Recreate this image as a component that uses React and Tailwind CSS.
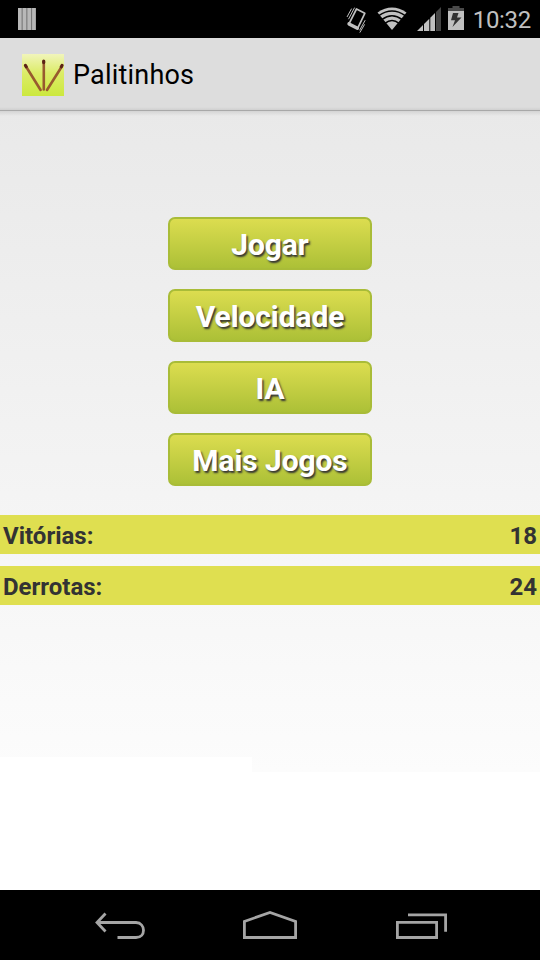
import React from 'react'

const menuItems = ["Jogar", "Velocidade", "IA", "Mais Jogos"];

const scores = [
  { label: "Vitórias:", value: 18 },
  { label: "Derrotas:", value: 24 },
];

const StatusBar = () => {
  return (
    <div className="flex h-[38px] shrink-0 items-start bg-black text-[#c0c0c0]">
      {/* sticks notification */}
      <svg width="18" height="22" viewBox="0 0 18 22" className="mt-2 ml-[18px]">
        <rect width="18" height="22" fill="#777" />
        <path d="M0 0h3.6v22H0zM4.7 0h3.6v22H4.7zM9.4 0h3.6v22H9.4zM14.1 0h3.6v22h-3.6z" fill="#b8b8b8" />
      </svg>
      {/* vibrate */}
      <svg width="24" height="28" viewBox="0 0 24 28" className="mt-1.5 ml-auto" fill="none" stroke="currentColor">
        <path d="M11.5 3 19.8 7.3 12.6 22.3 4 17.8z" strokeWidth="1.7" strokeLinejoin="round" />
        <path d="M4 17.9 12.4 22.3" strokeWidth="3.4" strokeLinecap="round" />
        <path d="M2 11 6.6 2.6M3.5 13.2 9.6 1.6M14.6 24.3 20.2 14.2M14.8 26.6 19.6 18.4" strokeWidth="1" />
      </svg>
      {/* wifi */}
      <svg width="30" height="24" viewBox="0 0 30 24" className="mt-[7px] ml-2" fill="none">
        <path d="M.5 5.4Q15-4.2 29.5 5.4L15 23z" fill="currentColor" />
        <path d="M1.8 8.6Q15-.5 28.2 8.6M4.8 12.6Q15 4.8 25.2 12.6M7.9 16.4Q15 10.6 22.1 16.4" stroke="#000" strokeWidth="1.4" />
      </svg>
      {/* signal */}
      <svg width="24" height="24" viewBox="0 0 24 24" className="mt-[7px] ml-2.5">
        <path d="M0 24 6 18v6zM7 17l5.3-5.3V24H7zM13.3 10.7 18 6v18h-4.7z" fill="currentColor" />
        <path d="M19 5 24 0v24h-5z" fill="#444" />
      </svg>
      {/* battery */}
      <svg width="16" height="24" viewBox="0 0 16 24" className="mt-1.5 ml-[7px]">
        <path d="M4.5 0h7v2H16v4H0V2h4.5z" fill="#4a4a4a" />
        <path d="M0 5h16v19H0z" fill="currentColor" />
        <path d="M5 7h5.5L9 11.5h4.5L4.5 21 7 14.3H3z" fill="#333" />
      </svg>
      <span className="mt-[5px] mr-[9px] ml-2 w-[59px] text-right text-2xl leading-[30px] tracking-[-0.3px] whitespace-nowrap">10:32</span>
    </div>
  )
}

const ActionBar = () => {
  return (
    <div className="flex h-[73px] shrink-0 items-center border-b border-[#a8a8a8] bg-[linear-gradient(#dddddd_69px,#d0d0d0)] pt-px pl-[22px]">
      <svg width="42" height="42" viewBox="0 0 42 42">
        <defs>
          <linearGradient id="logo" x1="0" y1="0" x2="0" y2="1">
            <stop offset="0" stopColor="#f1f5bb" />
            <stop offset="0.45" stopColor="#dcec68" />
            <stop offset="1" stopColor="#cce83e" />
          </linearGradient>
        </defs>
        <rect width="42" height="42" fill="url(#logo)" />
        <path d="M4 12.5 18.6 36M21.8 8V35.5M39.8 12.5 25 36" stroke="#985a2e" strokeWidth="2.6" strokeLinecap="round" />
        <path d="M3.5 11.5 4.2 12.7M21.7 7v1.6M40 11.5 39.3 12.7" stroke="#5c2216" strokeWidth="3.2" strokeLinecap="round" />
      </svg>
      <h1 className="ml-[9px] pt-px text-[27px] leading-8 tracking-[0.2px] text-black">Palitinhos</h1>
    </div>
  )
}

const NavBar = () => {
  return (
    <div className="flex h-[70px] shrink-0 items-start bg-black pt-5 pl-[94px]">
      <svg width="52" height="32" viewBox="0 0 52 32" fill="none" stroke="#a5a5a5" strokeWidth="2.8">
        <path d="M3 12.5H42C52 13 52 27.5 42 27.5H23.5" />
        <path d="M11.5 3.5 3 12.5 11.5 21.5" />
      </svg>
      <svg width="56" height="32" viewBox="0 0 56 32" className="ml-24" fill="none" stroke="#a5a5a5" strokeWidth="2.8">
        <path d="M2.4 27.5V11.5L28 2.4 53.6 11.5V27.5z" />
      </svg>
      <svg width="52" height="32" viewBox="0 0 52 32" className="ml-[98px]" fill="none" stroke="#a5a5a5" strokeWidth="2.8">
        <path d="M1.4 12.4h39.2v15.1H1.4z" />
        <path d="M12 4.8h37.6v17" />
      </svg>
    </div>
  )
}

const App = () => {
  return (
    <div className="flex h-[960px] w-[540px] flex-col overflow-hidden bg-white font-['Roboto',sans-serif]">
      <StatusBar />
      <ActionBar />
      <main className="flex flex-1 flex-col bg-[linear-gradient(#fff,#fff),linear-gradient(#d4d4d4,#e9e9e900_5px),linear-gradient(#e9e9e9,#fcfcfc)] bg-[length:252px_133px,100%_5px,100%_661px] bg-[position:0_100%,0_0,0_0] bg-no-repeat pt-[106px]">
        <div className="flex flex-col items-center gap-[19px]">
          {menuItems.map((item) => (
            <button
              key={item}
              type="button"
              className="h-[53px] w-[204px] rounded-[7px] border-2 border-[#a9bc38] bg-linear-to-b from-[#dede50] to-[#aabf36] bg-origin-border pt-0.5 text-[30px] leading-[47px] font-bold tracking-[-0.1px] whitespace-nowrap text-white [text-shadow:1.5px_1.5px_2px_#333]"
            >
              {item}
            </button>
          ))}
        </div>
        <div className="mt-[29px] flex flex-col gap-3">
          {scores.map((score) => (
            <div key={score.label} className="flex h-[39px] items-center justify-between bg-[#dfdf50] px-[3px] pt-[3px] text-2xl leading-9 font-bold text-[#333]">
              <span>{score.label}</span>
              <span>{score.value}</span>
            </div>
          ))}
        </div>
      </main>
      <NavBar />
    </div>
  )
}

export default App
